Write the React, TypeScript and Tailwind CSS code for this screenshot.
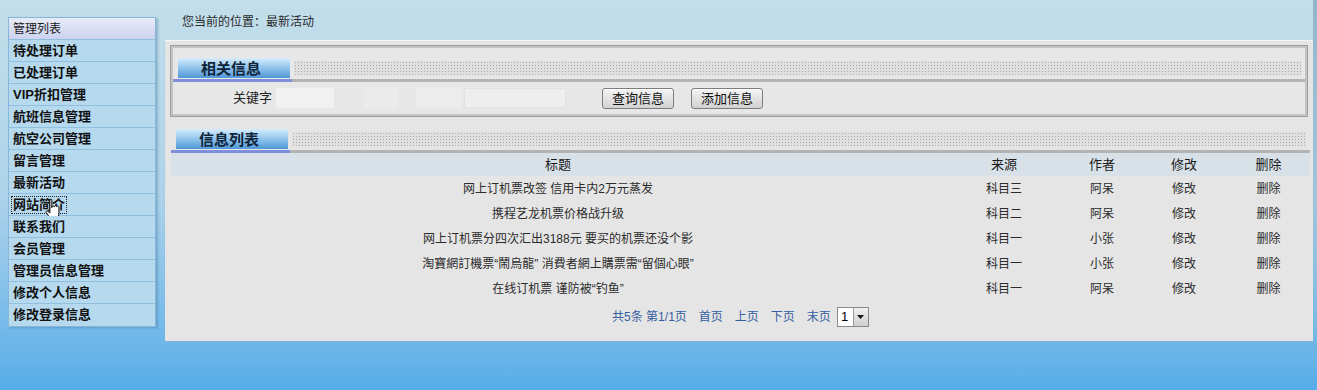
import React from 'react';

const menu = [
    '待处理订单',
    '已处理订单',
    'VIP折扣管理',
    '航班信息管理',
    '航空公司管理',
    '留言管理',
    '最新活动',
    '网站简介',
    '联系我们',
    '会员管理',
    '管理员信息管理',
    '修改个人信息',
    '修改登录信息',
];

const rows = [
    { title: '网上订机票改签 信用卡内2万元蒸发', src: '科目三', author: '阿呆' },
    { title: '携程艺龙机票价格战升级', src: '科目二', author: '阿呆' },
    { title: '网上订机票分四次汇出3188元 要买的机票还没个影', src: '科目一', author: '小张' },
    { title: '淘寶網訂機票“鬧烏龍” 消費者網上購票需“留個心眼”', src: '科目一', author: '小张' },
    { title: '在线订机票 谨防被“钓鱼”', src: '科目一', author: '阿呆' },
];

const font = "font-['Liberation_Sans','Noto_Sans_CJK_SC',sans-serif]";

const SectionHead: React.FC<{ title: string }> = ({ title }) => (
    <div className="flex items-end h-[34px]">
        <div className="border-b-[3px] border-[#7f8fdc] pl-[5px] w-[119px]">
            <div className="h-[20px] w-[112px] mb-[1px] bg-gradient-to-b from-[#d6ecfa] via-[#8fc4ec] to-[#4f97d6] flex items-center pl-[23px] text-[15px] font-bold text-[#10243a] leading-none">
                {title}
            </div>
        </div>
        <div className="flex-1 border-b-[3px] border-[#b3b3b3]">
            <div className="h-[14px] mb-[4px] ml-[2px] mr-[4px] bg-[#e0e0e0] bg-[radial-gradient(#a8a8a8_0.8px,transparent_0.9px)] bg-[length:3px_3px]" />
        </div>
    </div>
);

const Btn: React.FC<{ label: string }> = ({ label }) => (
    <button className="h-[21px] w-[72px] rounded-[3px] border border-[#7d7d7d] bg-gradient-to-b from-[#f4f4f4] to-[#d2d2d2] text-[13px] text-[#111] leading-none shadow-[inset_0_1px_0_#fff]">
        {label}
    </button>
);

export default function App() {
    return (
        <div className={`w-[1317px] h-[390px] overflow-hidden flex bg-gradient-to-b from-[#c3deea] via-[#aed3ea] to-[#55ade8] ${font}`}>
            {/* left menu */}
            <div className="pt-[17px] pl-[8px] w-[165px] shrink-0">
                <div className="w-[148px] border border-[#86b6d8] shadow-[2px_1px_2px_rgba(60,110,150,0.35)]">
                    <div className="h-[22px] flex items-center pl-[4px] bg-gradient-to-b from-[#e8eaf8] to-[#cdd3ee] border-b border-[#8fbfdf] text-[12px] text-[#1a1a1a]">
                        管理列表
                    </div>
                    {menu.map((m) => (
                        <div
                            key={m}
                            className="h-[22px] flex items-center pl-[3px] bg-[#b6d9ee] border-b border-[#8fc0e0] last:border-b-0 text-[13px] font-bold text-[#111] relative"
                        >
                            <span className={m === '网站简介' ? 'outline outline-1 outline-dotted outline-[#222] px-[1px] leading-[16px]' : 'px-[1px]'}>{m}</span>
                            {m === '网站简介' && (
                                <svg className="absolute left-[36px] top-[4px]" width="17" height="23" viewBox="0 0 14 19">
                                    <path
                                        d="M4 1.5c0-.8 1.6-.8 1.6 0V8l.4-1c.3-.8 1.6-.6 1.6.3l.4-.6c.4-.7 1.6-.4 1.6.4l.4-.3c.5-.4 1.5 0 1.5.8v4.8c0 2-1 3.2-1.4 4.6v1.5H5v-1.5C3.5 15.4 2 13.6 1 12c-.5-.9.5-1.8 1.3-1.1L4 12.4z"
                                        fill="#fff"
                                        stroke="#000"
                                        strokeWidth="0.8"
                                    />
                                </svg>
                            )}
                        </div>
                    ))}
                </div>
            </div>

            {/* main */}
            <div className="w-[1148px] shrink-0 flex flex-col">
                <div className="h-[40px] flex items-center pl-[17px] pt-[4px] text-[12px] text-[#2a2a2a]">您当前的位置：最新活动</div>
                <div className="h-[301px] bg-[#e5e5e5] border-t border-[#f2f6f8] shadow-[0_1px_1px_#7fb3d8] px-[6px] pt-[5px]">
                    {/* search box */}
                    <div className="w-[1136px] border-2 border-[#c4c4c4] outline outline-1 outline-[#9d9d9d] bg-[#e7e7e7]">
                        <SectionHead title="相关信息" />
                        <div className="h-[32px] flex items-center text-[13px] text-[#222]">
                            <span className="ml-[60px] whitespace-nowrap">关键字</span>
                            <div className="ml-[4px] h-[20px] w-[58px] bg-[#f1f1f1]" />
                            <div className="ml-[30px] h-[20px] w-[34px] bg-[#ebebeb]" />
                            <div className="ml-[18px] h-[20px] w-[46px] bg-[#ececec]" />
                            <div className="ml-[2px] h-[20px] w-[102px] bg-[#eeeeee] border border-[#e2e2e2]" />
                            <div className="ml-[36px]"><Btn label="查询信息" /></div>
                            <div className="ml-[17px]"><Btn label="添加信息" /></div>
                        </div>
                    </div>

                    {/* list */}
                    <div className="mt-[3px] w-[1139px]">
                        <SectionHead title="信息列表" />
                        <div className="grid grid-cols-[774px_118px_78px_86px_83px] text-[12px] text-[#2b2b2b]">
                            <div className="contents text-[13px] text-[#1a1a1a]">
                                {['标题', '来源', '作者', '修改', '删除'].map((h) => (
                                    <div key={h} className="h-[23px] bg-[#d9e1e8] flex items-center justify-center">{h}</div>
                                ))}
                            </div>
                            {rows.map((r) => (
                                <React.Fragment key={r.title}>
                                    <div className="h-[25px] flex items-center justify-center">{r.title}</div>
                                    <div className="h-[25px] flex items-center justify-center">{r.src}</div>
                                    <div className="h-[25px] flex items-center justify-center">{r.author}</div>
                                    <div className="h-[25px] flex items-center justify-center">修改</div>
                                    <div className="h-[25px] flex items-center justify-center">删除</div>
                                </React.Fragment>
                            ))}
                        </div>
                        <div className="h-[32px] flex items-center justify-center text-[12px] text-[#35609f]">
                            <span>共5条 第1/1页</span>
                            <span className="ml-[12px]">首页</span>
                            <span className="ml-[12px]">上页</span>
                            <span className="ml-[12px]">下页</span>
                            <span className="ml-[12px]">末页</span>
                            <div className="ml-[6px] h-[20px] w-[32px] flex border border-[#8a8a8a] bg-white">
                                <span className="flex-1 flex items-center pl-[3px] text-[13px] text-black">1</span>
                                <span className="w-[15px] bg-gradient-to-b from-[#f0f0f0] to-[#cfcfcf] border-l border-[#999] flex items-center justify-center">
                                    <svg width="7" height="4" viewBox="0 0 7 4"><path d="M0 0h7L3.5 4z" fill="#111" /></svg>
                                </span>
                            </div>
                        </div>
                    </div>
                </div>
            </div>
            <div className="w-[4px] bg-gradient-to-b from-[#8fb6cc] to-transparent" />
        </div>
    );
}
